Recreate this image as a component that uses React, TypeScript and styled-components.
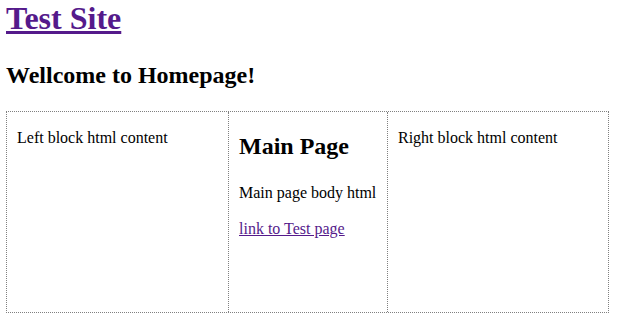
import React from "react";
import styled, { createGlobalStyle } from "styled-components";

const Global = createGlobalStyle`
  html, body { margin: 0; padding: 0; background: #fff; }
  body { font-family: "Liberation Serif", "Times New Roman", serif; font-size: 16px; color: #000; }
`;

const Page = styled.div`
  padding: 0 12px 0 6px;
`;

const SiteTitle = styled.h1`
  font-size: 32px;
  font-weight: bold;
  margin: 0 0 24px;
  line-height: 37px;
`;

const TitleLink = styled.a`
  color: #551a8b;
  text-decoration: underline;
`;

const Welcome = styled.h2`
  font-size: 24px;
  font-weight: bold;
  margin: 0 0 22px;
  line-height: 28px;
`;

const Layout = styled.div`
  display: grid;
  grid-template-columns: 222px 159px 220px;
  width: 603px;
  height: 202px;
  border: 1px dotted #808080;
  box-sizing: border-box;
`;

const Cell = styled.div<{ $last?: boolean }>`
  padding: 1px 10px;
  border-right: ${(p) => (p.$last ? "none" : "1px dotted #808080")};
  box-sizing: border-box;
`;

const Text = styled.p`
  margin: 16px 0 18px;
  line-height: 18px;
`;

const CellHeading = styled.h2`
  font-size: 24px;
  font-weight: bold;
  margin: 19px 0 24px;
  line-height: 28px;
`;

const PageLink = styled.a`
  color: #551a8b;
  text-decoration: underline;
`;

export default function App() {
  return (
    <>
      <Global />
      <Page>
        <SiteTitle>
          <TitleLink href="#">Test Site</TitleLink>
        </SiteTitle>
        <Welcome>Wellcome to Homepage!</Welcome>
        <Layout>
          <Cell>
            <Text>Left block html content</Text>
          </Cell>
          <Cell>
            <CellHeading>Main Page</CellHeading>
            <Text>Main page body html</Text>
            <Text>
              <PageLink href="#">link to Test page</PageLink>
            </Text>
          </Cell>
          <Cell $last>
            <Text>Right block html content</Text>
          </Cell>
        </Layout>
      </Page>
    </>
  );
}
